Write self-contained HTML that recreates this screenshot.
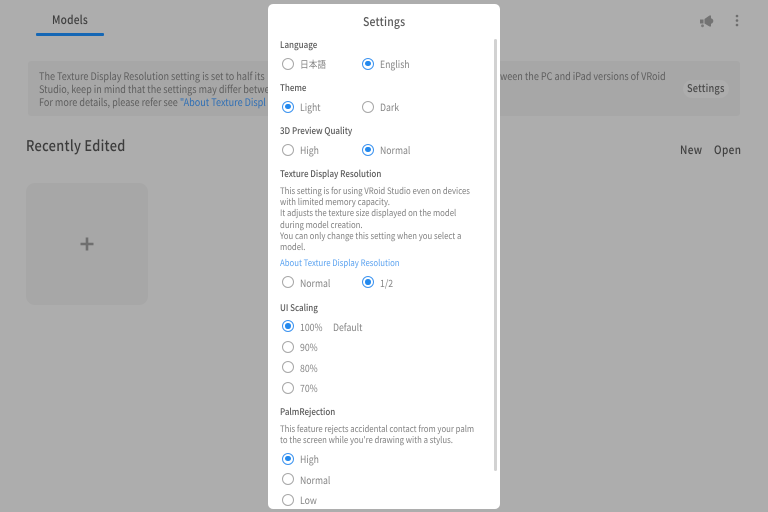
<!DOCTYPE html>
<html><head><meta charset="utf-8"><style>
html,body{margin:0;padding:0;width:768px;height:512px;overflow:hidden;background:#adadad}
body{position:relative;font-family:"Noto Sans CJK JP","Liberation Sans",sans-serif;text-rendering:geometricPrecision}
.t{position:absolute;white-space:nowrap;line-height:16px;transform:scaleX(.87);transform-origin:0 0;filter:blur(.25px)}
.b{position:absolute}
.h{font-size:9.2px;font-weight:500;color:#5a5a5a;left:279.5px;margin-top:-1px}
.o{font-size:10px;color:#858585;margin-top:-.5px}
.d{font-size:8.95px;color:#808080;left:279.5px;margin-top:.5px}
.bg{font-size:10.45px;color:#5e5e5e}
.r{position:absolute;width:10px;height:10px;border:1.4px solid #a8a8a8;border-radius:50%;background:#fff}
.r.on{border-color:#3d94f0}
.r.on::after{content:"";position:absolute;left:2.3px;top:2.3px;width:5.4px;height:5.4px;border-radius:50%;background:#2389ee}
</style></head><body>
<!-- background -->
<div class="t" style="left:51.5px;top:11.500px;font-size:11.700px;font-weight:500;color:#3f3f3f;letter-spacing:.23px">Models</div>
<div class="b" style="left:36px;top:33px;width:67.5px;height:2.5px;background:#1567b5;border-radius:1px"></div>
<div class="b" style="left:28px;top:61px;width:712px;height:55px;background:#a7a7a7;border-radius:3px"></div>
<div class="t bg" style="left:38.5px;top:68.5px">The Texture Display Resolution setting is set to half its</div>
<div class="t bg" style="left:38.5px;top:81.5px">Studio, keep in mind that the settings may differ betwe</div>
<div class="t bg" style="left:38.5px;top:94.5px">For more details, please refer see <span style="color:#2f6fb5">"About Texture Displ</span></div>
<div class="t bg" style="left:500px;top:68.5px">ween the PC and iPad versions of VRoid</div>
<div class="b" style="left:683px;top:80px;width:46px;height:18px;background:#adadad;border-radius:9px"></div>
<div class="t" style="left:687px;top:80.500px;font-size:10.600px;font-weight:500;color:#4a4a4a;letter-spacing:.23px">Settings</div>
<div class="t" style="left:25.5px;top:136.500px;font-size:14.700px;line-height:18px;font-weight:500;color:#3c3c3c;letter-spacing:.35px">Recently Edited</div>
<div class="t" style="left:680px;top:141.500px;font-size:11.500px;font-weight:500;color:#414141;letter-spacing:.46px">New</div>
<div class="t" style="left:713.5px;top:141.500px;font-size:11.500px;font-weight:500;color:#414141;letter-spacing:.46px">Open</div>
<div class="b" style="left:26px;top:183px;width:122px;height:122px;background:#a7a7a7;border-radius:9px"></div>
<svg class="b" style="left:80px;top:237px" width="14" height="14" viewBox="0 0 14 14"><path d="M7 .5v13M.5 7h13" stroke="#6f6f6f" stroke-width="2.6" fill="none"/></svg>
<svg class="b" style="left:698px;top:13px" width="16" height="15" viewBox="0 0 16 15"><path d="M2 6.500h3.500v4H2zM6.500 6l5-3.500h1.500v11h-1.500l-5-3z" fill="#737373"/><circle cx="12.500" cy="8" r="2.800" fill="#737373"/><circle cx="4.500" cy="12.800" r="1.400" fill="#7a7a7a"/></svg>
<svg class="b" style="left:735px;top:14px" width="4" height="13" viewBox="0 0 4 13"><circle cx="2" cy="2" r="1.300" fill="#6d6d6d"/><circle cx="2" cy="6.500" r="1.300" fill="#6d6d6d"/><circle cx="2" cy="11" r="1.300" fill="#6d6d6d"/></svg>
<!-- modal -->
<div class="b" style="left:268px;top:3.500px;width:231.500px;height:505px;background:#fff;border-radius:5px"></div>
<div class="b" style="left:494px;top:39px;width:3px;height:432px;background:#d2d2d2;border-radius:1.500px"></div>
<div class="t" style="left:363px;top:14px;font-size:12px;font-weight:500;color:#5a5a5a;letter-spacing:.23px">Settings</div>

<div class="t h" style="top:37px">Language</div>
<div class="r" style="left:282px;top:57.500px"></div><div class="t o" style="left:300px;top:56px">日本語</div>
<div class="r on" style="left:362px;top:57.500px"></div><div class="t o" style="left:379.500px;top:56px">English</div>

<div class="t h" style="top:80px">Theme</div>
<div class="r on" style="left:282px;top:100.500px"></div><div class="t o" style="left:300px;top:99px">Light</div>
<div class="r" style="left:362px;top:100.500px"></div><div class="t o" style="left:379.500px;top:99px">Dark</div>

<div class="t h" style="top:123px">3D Preview Quality</div>
<div class="r" style="left:282px;top:143.500px"></div><div class="t o" style="left:300px;top:142.500px">High</div>
<div class="r on" style="left:362px;top:143.500px"></div><div class="t o" style="left:379.500px;top:142.500px">Normal</div>

<div class="t h" style="top:166px">Texture Display Resolution</div>
<div class="t d" style="top:182px">This setting is for using VRoid Studio even on devices</div>
<div class="t d" style="top:193.500px">with limited memory capacity.</div>
<div class="t d" style="top:204.500px">It adjusts the texture size displayed on the model</div>
<div class="t d" style="top:216px">during model creation.</div>
<div class="t d" style="top:227.500px">You can only change this setting when you select a</div>
<div class="t d" style="top:238.500px">model.</div>
<div class="t d" style="top:254px;color:#5aa2f0">About Texture Display Resolution</div>
<div class="r" style="left:282px;top:276px"></div><div class="t o" style="left:300px;top:275px">Normal</div>
<div class="r on" style="left:362px;top:276px"></div><div class="t o" style="left:379.500px;top:275px">1/2</div>

<div class="t h" style="top:299.500px">UI Scaling</div>
<div class="r on" style="left:282px;top:320px"></div><div class="t o" style="left:300px;top:319px">100%</div><div class="t o" style="left:333px;top:319px">Default</div>
<div class="r" style="left:282px;top:340.500px"></div><div class="t o" style="left:300px;top:339.500px">90%</div>
<div class="r" style="left:282px;top:361px"></div><div class="t o" style="left:300px;top:360px">80%</div>
<div class="r" style="left:282px;top:381.500px"></div><div class="t o" style="left:300px;top:380.500px">70%</div>

<div class="t h" style="top:404px">PalmRejection</div>
<div class="t d" style="top:420.500px">This feature rejects accidental contact from your palm</div>
<div class="t d" style="top:431.500px">to the screen while you're drawing with a stylus.</div>
<div class="r on" style="left:282px;top:452.500px"></div><div class="t o" style="left:300px;top:451.500px">High</div>
<div class="r" style="left:282px;top:473px"></div><div class="t o" style="left:300px;top:472px">Normal</div>
<div class="r" style="left:282px;top:493.500px"></div><div class="t o" style="left:300px;top:492.500px">Low</div>
</body></html>
